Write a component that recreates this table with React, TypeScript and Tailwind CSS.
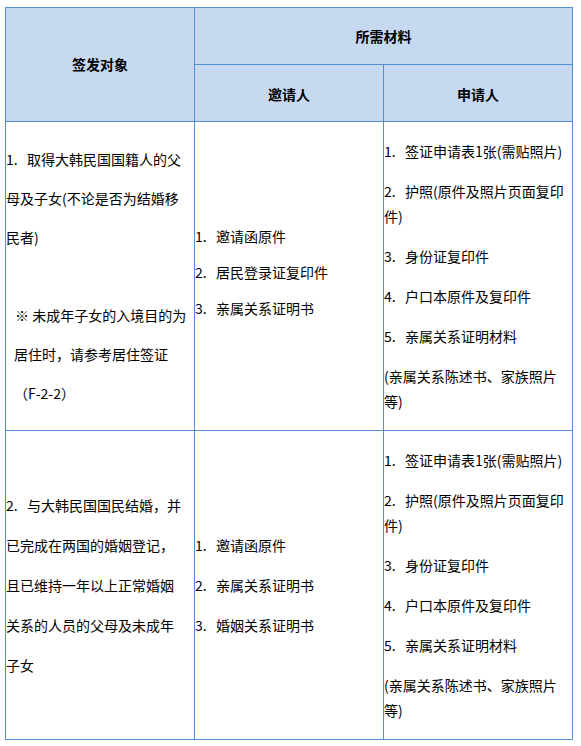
import React from "react";

const cjk = "font-['Noto_Sans_CJK_SC','Noto_Sans',sans-serif]";

function Num({ n }: { n: number }) {
  return <span className="inline-block w-[21px]">{n}.</span>;
}

type Para = { num?: number; lines: string[] };

const applicantDocs: Para[] = [
  { num: 1, lines: ["签证申请表1张(需贴照片)"] },
  { num: 2, lines: ["护照(原件及照片页面复印", "件)"] },
  { num: 3, lines: ["身份证复印件"] },
  { num: 4, lines: ["户口本原件及复印件"] },
  { num: 5, lines: ["亲属关系证明材料"] },
  { lines: ["(亲属关系陈述书、家族照片", "等)"] },
];

function ApplicantCell() {
  return (
    <div className="flex flex-col justify-center gap-[15px] border-r border-b border-[#538ed5]">
      {applicantDocs.map((p, i) => (
        <div key={i} className="leading-[25px]">
          {p.lines.map((line, j) => (
            <div key={j} className="whitespace-nowrap">
              {j === 0 && p.num !== undefined && <Num n={p.num} />}
              {line}
            </div>
          ))}
        </div>
      ))}
    </div>
  );
}

function ListCell({
  items,
  className,
}: {
  items: string[];
  className: string;
}) {
  return (
    <div className={`flex flex-col justify-center border-r border-b border-[#538ed5] ${className}`}>
      {items.map((item, i) => (
        <div key={i} className="whitespace-nowrap">
          <Num n={i + 1} />
          {item}
        </div>
      ))}
    </div>
  );
}

export default function App() {
  return (
    <div className={`bg-white min-h-[746px] pt-[7px] pl-[5px] text-[14px] text-black ${cjk}`}>
      <div className="grid w-[568px] grid-cols-[189px_189px_189px] grid-rows-[57px_57px_309px_309px] border-l border-t border-[#538ed5]">
        {/* header */}
        <div className="row-span-2 flex items-center justify-center border-r border-b border-[#538ed5] bg-[#c6d9f1] font-bold">
          签发对象
        </div>
        <div className="col-span-2 flex items-center justify-center border-r border-b border-[#538ed5] bg-[#c6d9f1] font-bold">
          所需材料
        </div>
        <div className="flex items-center justify-center border-r border-b border-[#538ed5] bg-[#c6d9f1] pt-[3px] font-bold">
          邀请人
        </div>
        <div className="flex items-center justify-center border-r border-b border-[#538ed5] bg-[#c6d9f1] pt-[3px] font-bold">
          申请人
        </div>

        {/* row 1 */}
        <div className="flex flex-col justify-center border-r border-b border-[#538ed5] leading-[39px]">
          <div className="whitespace-nowrap">
            <Num n={1} />
            取得大韩民国国籍人的父
          </div>
          <div className="whitespace-nowrap">母及子女(不论是否为结婚移</div>
          <div className="whitespace-nowrap">民者)</div>
          <div className="h-[39px]" />
          <div className="whitespace-nowrap pl-[9px]">※ 未成年子女的入境目的为</div>
          <div className="whitespace-nowrap pl-[8px]">居住时，请参考居住签证</div>
          <div className="whitespace-nowrap pl-[8px]">（F-2-2）</div>
        </div>
        <ListCell
          items={["邀请函原件", "居民登录证复印件", "亲属关系证明书"]}
          className="leading-[36px] pb-[8px]"
        />
        <ApplicantCell />

        {/* row 2 */}
        <div className="flex flex-col justify-center border-r border-b border-[#538ed5] leading-[40px]">
          <div className="whitespace-nowrap">
            <Num n={2} />
            与大韩民国国民结婚，并
          </div>
          <div className="whitespace-nowrap">已完成在两国的婚姻登记，</div>
          <div className="whitespace-nowrap">且已维持一年以上正常婚姻</div>
          <div className="whitespace-nowrap">关系的人员的父母及未成年</div>
          <div className="whitespace-nowrap">子女</div>
        </div>
        <ListCell
          items={["邀请函原件", "亲属关系证明书", "婚姻关系证明书"]}
          className="leading-[40px]"
        />
        <ApplicantCell />
      </div>
    </div>
  );
}
